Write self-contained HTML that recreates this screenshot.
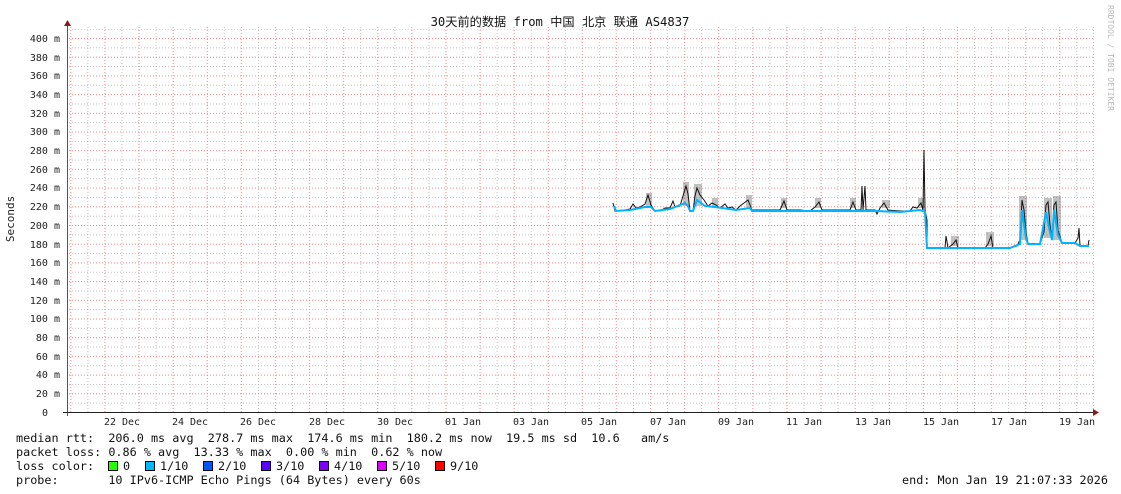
<!DOCTYPE html>
<html><head><meta charset="utf-8"><style>
body{margin:0;background:#fff;width:1121px;height:494px;overflow:hidden}
svg{display:block}
.m{font-family:"DejaVu Sans Mono","Liberation Mono",monospace}
</style></head><body>
<svg width="1121" height="494" xmlns="http://www.w3.org/2000/svg">
<defs>
<pattern id="vg" patternUnits="userSpaceOnUse" x="87.4" y="0" width="34.1" height="3">
<rect x="0" y="0" width="1" height="1" fill="#c4c4c4"/>
<rect x="17.05" y="0" width="1" height="1" fill="#f08888"/>
</pattern>
<pattern id="hg" patternUnits="userSpaceOnUse" x="0" y="412" width="3" height="18.7">
<rect x="0" y="0" width="1" height="1" fill="#f08888"/>
<rect x="0" y="9.35" width="1" height="1" fill="#c4c4c4"/>
</pattern>
</defs>
<rect x="68" y="27" width="1026" height="385" fill="url(#vg)"/>
<rect x="68" y="29" width="1026" height="383" fill="url(#hg)"/>
<line x1="67.5" y1="26" x2="67.5" y2="416" stroke="#555" stroke-width="1"/>
<line x1="63" y1="412.5" x2="1095" y2="412.5" stroke="#222" stroke-width="1"/>
<polygon points="64,26 71,26 67.5,20" fill="#8b1a1a"/>
<polygon points="1093,409 1093,416 1099,412.5" fill="#8b1a1a"/>
<g class="m" font-size="10" fill="#222" text-anchor="end">
<text x="60" y="42">400 m</text><text x="60" y="61">380 m</text><text x="60" y="79">360 m</text><text x="60" y="98">340 m</text><text x="60" y="117">320 m</text><text x="60" y="135">300 m</text><text x="60" y="154">280 m</text><text x="60" y="173">260 m</text><text x="60" y="191">240 m</text><text x="60" y="210">220 m</text><text x="60" y="229">200 m</text><text x="60" y="248">180 m</text><text x="60" y="266">160 m</text><text x="60" y="285">140 m</text><text x="60" y="304">120 m</text><text x="60" y="322">100 m</text><text x="60" y="341">80 m</text><text x="60" y="360">60 m</text><text x="60" y="378">40 m</text><text x="60" y="397">20 m</text><text x="48" y="416">0</text>
</g>
<g class="m" font-size="10" fill="#222" text-anchor="middle">
<text x="122" y="425">22 Dec</text><text x="190" y="425">24 Dec</text><text x="258" y="425">26 Dec</text><text x="327" y="425">28 Dec</text><text x="395" y="425">30 Dec</text><text x="463" y="425">01 Jan</text><text x="531" y="425">03 Jan</text><text x="599" y="425">05 Jan</text><text x="668" y="425">07 Jan</text><text x="736" y="425">09 Jan</text><text x="804" y="425">11 Jan</text><text x="873" y="425">13 Jan</text><text x="941" y="425">15 Jan</text><text x="1009" y="425">17 Jan</text><text x="1077" y="425">19 Jan</text>
</g>
<text x="560" y="26" text-anchor="middle" font-size="12.2" fill="#111" font-family="'DejaVu Sans Mono','Noto Sans CJK SC',monospace">30天前的数据 from 中国 北京 联通 AS4837</text>
<text transform="translate(14,219) rotate(-90)" text-anchor="middle" class="m" font-size="11" fill="#222">Seconds</text>
<text transform="translate(1108,5) rotate(90)" class="m" font-size="8" fill="#bbb">RRDTOOL / TOBI OETIKER</text>
<g fill="#777" opacity="0.45">
<rect x="646" y="193" width="6" height="15"/><rect x="683" y="182" width="6" height="24"/><rect x="694" y="184" width="8" height="22"/><rect x="712" y="198" width="6" height="10"/><rect x="746" y="195" width="6" height="12"/><rect x="781" y="198" width="6" height="10"/><rect x="815" y="198" width="6" height="10"/><rect x="850" y="198" width="6" height="10"/><rect x="882" y="200" width="8" height="8"/><rect x="918" y="198" width="6" height="10"/><rect x="951" y="236" width="8" height="10"/><rect x="986" y="232" width="8" height="14"/><rect x="1019" y="196" width="8" height="44"/><rect x="1044" y="198" width="8" height="40"/><rect x="1053" y="196" width="8" height="44"/>
</g>
<polyline fill="none" stroke="#111" stroke-width="1" points="613,203 615,211 620,211 630,209 633,204 636,208 640,207 645,204 648,195 651,205 655,211 660,211 665,208 670,208 673,201 675,207 680,206 683,196 686,186 688,194 690,211 693,211 695,196 697,188 700,195 704,200 708,206 712,203 716,205 720,208 725,204 728,208 732,207 736,210 740,206 748,200 752,210 780,210 784,201 787,210 800,210 810,211 815,207 819,202 822,210 850,210 853,202 856,210 861,210 862,186 863,210 865,186 866,210 875,210 877,214 880,208 884,203 888,210 900,211 910,211 913,207 917,208 921,203 923,210 924,150 925,210 927,220 927,248 945,248 946,236 948,248 953,244 956,240 958,248 985,248 988,244 991,236 993,248 1010,248 1017,246 1020,240 1022,200 1024,210 1026,232 1028,244 1040,244 1044,232 1046,205 1048,202 1050,225 1052,240 1054,205 1056,202 1058,230 1062,243 1075,243 1078,238 1079,228 1080,246 1088,246 1089,240"/>
<polyline fill="none" stroke="#00b4ff" stroke-width="2" points="614,206 616,211 630,210 645,207 651,207 655,211 670,209 685,203 688,206 690,211 693,211 697,200 705,206 715,207 736,210 750,208 752,211 850,211 875,211 900,212 920,210 925,212 927,248 1010,248 1020,244 1022,210 1026,238 1028,244 1040,244 1046,212 1050,232 1052,240 1054,210 1058,235 1062,243 1075,243 1080,246 1089,246"/>
<g class="m" font-size="11.8" fill="#111">
<text x="16" y="442" xml:space="preserve">median rtt:  206.0 ms avg  278.7 ms max  174.6 ms min  180.2 ms now  19.5 ms sd  10.6   am/s</text>
<text x="16" y="456" xml:space="preserve">packet loss: 0.86 % avg  13.33 % max  0.00 % min  0.62 % now</text>
<text x="16" y="470">loss color:</text>
<text x="123" y="470">0</text><text x="160" y="470">1/10</text><text x="218" y="470">2/10</text><text x="276" y="470">3/10</text><text x="334" y="470">4/10</text><text x="392" y="470">5/10</text><text x="450" y="470">9/10</text>
<text x="16" y="484" xml:space="preserve">probe:       10 IPv6-ICMP Echo Pings (64 Bytes) every 60s</text>
<text x="902" y="484" xml:space="preserve">end: Mon Jan 19 21:07:33 2026</text>
</g>
<g stroke="#000" stroke-width="1">
<rect x="108.5" y="461.5" width="9" height="9" fill="#26ff00"/>
<rect x="145.5" y="461.5" width="9" height="9" fill="#00b8ff"/>
<rect x="203.5" y="461.5" width="9" height="9" fill="#0059ff"/>
<rect x="261.5" y="461.5" width="9" height="9" fill="#5e00ff"/>
<rect x="319.5" y="461.5" width="9" height="9" fill="#7e00ff"/>
<rect x="377.5" y="461.5" width="9" height="9" fill="#dd00ff"/>
<rect x="435.5" y="461.5" width="9" height="9" fill="#ff0000"/>
</g>
</svg>
</body></html>
